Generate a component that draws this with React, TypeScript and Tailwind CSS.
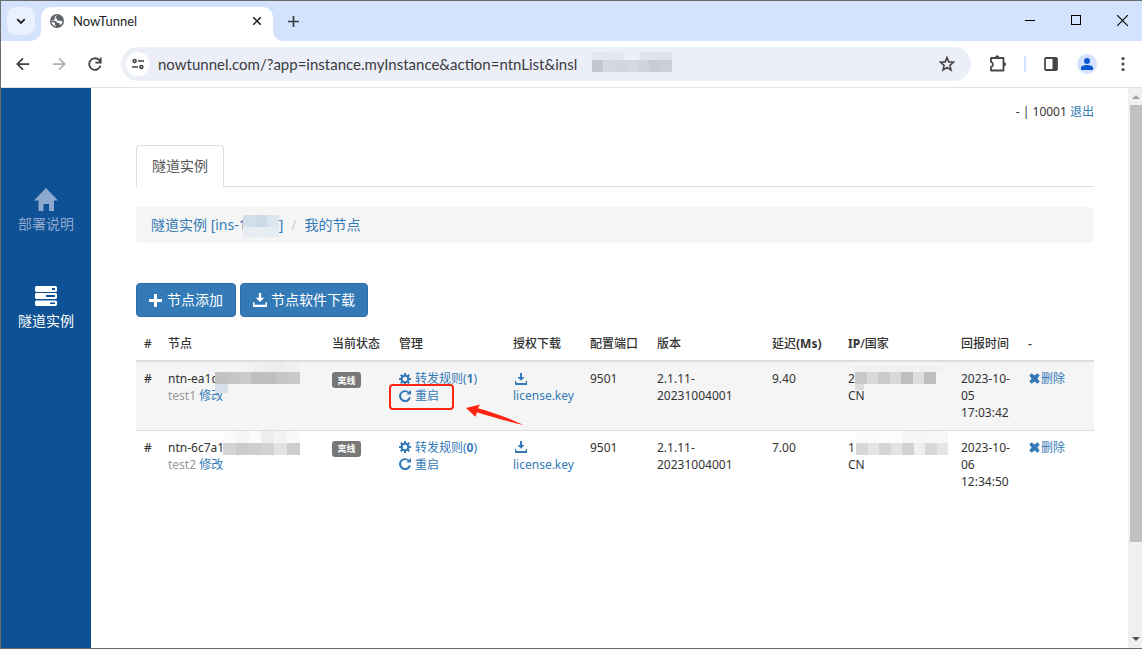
import type { ReactNode } from 'react';

type IconProps = { className?: string };

function Svg({ className = 'size-3', box = '0 0 12 12', children }: IconProps & { box?: string; children: ReactNode }) {
  return (
    <svg viewBox={box} className={`shrink-0 ${className}`} fill="currentColor" aria-hidden="true">
      {children}
    </svg>
  );
}

function PlusIcon() {
  return (
    <Svg box="0 0 13 13" className="size-[13px]">
      <path d="M5 0h3v5h5v3H8v5H5V8H0V5h5z" />
    </Svg>
  );
}

function DownloadIcon({ className }: IconProps) {
  return (
    <Svg className={className}>
      <path d="M5 0h2v4h2.600L6 7.800 2.400 4H5zM0 8h1.300v2h9.400V8H12v4H0z" />
    </Svg>
  );
}

function CogIcon() {
  return (
    <Svg>
      <path
        fillRule="evenodd"
        d="M5 0h2v1.700l1.200.5L9.500 1 11 2.500 9.800 3.800l.5 1.200H12v2h-1.700l-.5 1.200L11 9.500 9.500 11 8.200 9.800l-1.200.5V12H5v-1.700l-1.200-.5L2.500 11 1 9.500l1.200-1.300L1.700 7H0V5h1.700l.5-1.200L1 2.500 2.500 1l1.300 1.200L5 1.700zM6 3.700a2.300 2.300 0 1 0 0 4.600 2.300 2.300 0 0 0 0-4.600z"
      />
    </Svg>
  );
}

function RepeatIcon() {
  return (
    <Svg>
      <path d="M10 1.700 12 0v4.500H7.500L8.900 3A4 4 0 1 0 9.900 7.300h2A6 6 0 1 1 10 1.700z" />
    </Svg>
  );
}

function RemoveIcon() {
  return (
    <Svg box="0 0 11 11" className="size-[11px]">
      <path d="M2.600.3 5.500 2.600 8.400.3l2.300 2.300L8.400 5.500l2.300 2.900-2.300 2.300-2.900-2.300-2.900 2.300L.3 8.400l2.300-2.900L.3 2.600z" />
    </Svg>
  );
}

function HomeIcon() {
  return (
    <Svg box="0 0 24 23" className="h-[23px] w-6">
      <path d="M12 0l12 12.500h-4V23h-5v-7H9.500v7h-5V12.500H0z" />
    </Svg>
  );
}

function ServerIcon() {
  return (
    <Svg box="0 0 22 20" className="h-5 w-[22px]">
      <path
        fillRule="evenodd"
        d="M1 0h20l1 1v4l-1 1H1L0 5V1zM17 2v2h3V2zM1 7h20l1 1v4l-1 1H1l-1-1V8zM11 9v2h9V9zM1 14.500h20l1 1V19l-1 1H1l-1-1v-3.500zM15 16.500v1.500h5v-1.500z"
      />
    </Svg>
  );
}

function GlobeIcon() {
  return (
    <Svg box="0 0 14 14" className="size-[14px] text-[#5f6368]">
      <circle cx="7" cy="7" r="7" />
      <path
        fill="#fff"
        d="M7.600 1.500c-.9.700-2 .9-2.100 1.900 0 1.100 1.300.7 1.700 1.600.3.800-.4 1.200.3 1.700.9.600 1.500-.6 2.400-.2.900.500 1.300 1 2.600.7-.1 1.500-.8 2.900-2 3.900-.8-.5-.7-1.700-1.500-2-.7-.2-1.500.100-1.900-.7-.5-1-1.700-1.300-3-1.300H1.500l.1.900c1 .2 2.700.1 3.200.9.500.8-.3 1.500.2 2.200.3.600.9.500 1 1.300C3.300 12 1.500 9.800 1.500 7l.1-.4h2.300c.6-.3.200-1.200.9-1.700.4-.4-.3-1.300-.1-2C5.300 1.900 6.400 1.500 7.600 1.500z"
      />
    </Svg>
  );
}

function Stroke({ className = 'size-4', width = 2, children }: IconProps & { width?: number; children: ReactNode }) {
  return (
    <svg viewBox="0 0 16 16" className={`shrink-0 ${className}`} fill="none" stroke="currentColor" strokeWidth={width} aria-hidden="true">
      {children}
    </svg>
  );
}

// Pixelated strip that hides part of a value
function Mosaic({ className, cells }: { className: string; cells: string[] }) {
  return (
    <span className={`absolute flex ${className}`} aria-hidden="true">
      {cells.map((color, i) => (
        <span key={i} className={`flex-1 ${color}`} />
      ))}
    </span>
  );
}

function Tab() {
  return (
    <div className="relative mt-1.5 flex h-[34px] w-[232px] items-center rounded-t-[10px] bg-white pr-2.5 pb-1.5 pl-[9px]">
      <span className="absolute bottom-0 -left-2.5 size-2.5 bg-white">
        <span className="block size-full rounded-br-[10px] bg-[#d3e3fd]" />
      </span>
      <span className="absolute -right-2.5 bottom-0 size-2.5 bg-white">
        <span className="block size-full rounded-bl-[10px] bg-[#d3e3fd]" />
      </span>
      <GlobeIcon />
      <span className="ml-[9px] flex-1 font-[family-name:Lato,sans-serif] text-[13px] leading-4 text-[#1f1f1f]">NowTunnel</span>
      <button aria-label="Close tab" className="flex size-3 items-center justify-center text-[#1f1f1f]">
        <Stroke className="size-[10px]" width={2.5}>
          <path d="M2 2l12 12M14 2L2 14" />
        </Stroke>
      </button>
    </div>
  );
}

function TitleBar() {
  return (
    <div className="flex h-10 bg-[#d3e3fd]">
      <button aria-label="Search tabs" className="mx-1.5 mt-1.5 flex size-7 items-center justify-center rounded-[9px] bg-[#e9f1fe] text-[#1f1f1f]">
        <Stroke className="size-[10px]" width={3}>
          <path d="M2 5l6 6 6-6" />
        </Stroke>
      </button>
      <Tab />
      <button aria-label="New tab" className="mt-1.5 ml-3.5 flex h-7 w-3 items-center justify-center text-[#3c3f44]">
        <Stroke className="size-[11px]" width={2.5}>
          <path d="M8 0v16M0 8h16" />
        </Stroke>
      </button>
      <div className="ml-auto flex h-[38px] items-center gap-9 pr-3.5 text-black">
        <button aria-label="Minimize">
          <Stroke className="size-[10px]" width={1.6}>
            <path d="M0 8.800h16" />
          </Stroke>
        </button>
        <button aria-label="Maximize" className="size-[10px] border border-black" />
        <button aria-label="Close">
          <Stroke className="size-[11px]" width={1.6}>
            <path d="M0 0l16 16M16 0L0 16" />
          </Stroke>
        </button>
      </div>
    </div>
  );
}

function Toolbar() {
  return (
    <div className="flex h-[47px] items-center border-b border-[#dfe1e5] bg-white text-[#3c3f44]">
      <div className="flex items-center gap-[22px] pl-[15px]">
        <button aria-label="Back">
          <Stroke className="size-3.5">
            <path d="M15 8H2M8 1.500L1.500 8 8 14.500" />
          </Stroke>
        </button>
        <button aria-label="Forward" className="text-[#aeb0b3]">
          <Stroke className="size-3.5">
            <path d="M1 8h13M8 1.500L14.500 8 8 14.500" />
          </Stroke>
        </button>
        <button aria-label="Reload">
          <Stroke className="size-3.5">
            <path d="M14.300 10A6.600 6.600 0 1 1 12.600 3.300L14.500 5.500" />
            <path d="M14.500 .5v6h-6" />
          </Stroke>
        </button>
      </div>
      <div className="relative ml-[19px] flex h-[34px] flex-1 items-center rounded-full bg-[#eceef8] pr-4 pl-[5px]">
        <span className="flex size-6 items-center justify-center rounded-full bg-white">
          <Stroke className="size-3">
            <circle cx="3.500" cy="4" r="2" />
            <path d="M8 4h8M0 12h8" />
            <circle cx="12.500" cy="12" r="2" />
          </Stroke>
        </span>
        <input
          aria-label="Address"
          className="ml-2 h-6 min-w-0 flex-1 bg-transparent font-[family-name:Lato,sans-serif] text-[15px] text-[#3a3b3d] outline-none"
          defaultValue="nowtunnel.com/?app=instance.myInstance&action=ntnList&insl"
        />
        <Mosaic className="top-[5px] left-[471px] h-2 w-20" cells={['bg-[#e5e7ef]', 'bg-[#e6e8f1]', 'bg-[#eceef8]', 'bg-[#e2e4ed]', 'bg-[#dfe2ea]']} />
        <Mosaic
          className="top-[13px] left-[471px] h-3 w-20"
          cells={['bg-[#c5c7ce]', 'bg-[#d5d8e1]', 'bg-[#d3d6df]', 'bg-[#d7d9e2]', 'bg-[#d0d3dc]', 'bg-[#c9ccd4]', 'bg-[#cccfd7]']}
        />
        <button aria-label="Bookmark this page" className="text-[#474747]">
          <Stroke className="size-4" width={1.6}>
            <path d="M8 1.500l1.800 4.400 4.700.4-3.600 3.100 1.100 4.600L8 11.500 4 14l1.100-4.600L1.500 6.300l4.700-.4z" />
          </Stroke>
        </button>
      </div>
      <div className="flex items-center pr-[17px] pl-[18px] text-[#474747]">
        <button aria-label="Extensions">
          <svg viewBox="0 0 18 18" className="size-[18px]" fill="none" stroke="currentColor" strokeWidth="1.8" aria-hidden="true">
            <path d="M2 3h12.500v12.500H2v-3.600a2.600 2.600 0 0 0 0-5z" strokeLinejoin="round" />
            <path d="M6.500 2.200a1.800 1.800 0 0 1 3.500 0zM15.200 7.500a1.800 1.800 0 0 1 0 3.500z" fill="currentColor" strokeWidth="1" />
          </svg>
        </button>
        <span className="ml-[17px] h-4 w-0.5 bg-[#d3e3fd]" />
        <button aria-label="Side panel" className="ml-[18px]">
          <svg viewBox="0 0 14 14" className="size-3.5" aria-hidden="true">
            <rect x="1" y="1" width="12" height="12" rx="1" fill="none" stroke="currentColor" strokeWidth="1.8" />
            <path d="M8.500 1H13v12H8.500z" fill="currentColor" />
          </svg>
        </button>
        <button aria-label="Profile" className="ml-[19px] flex size-5 items-center justify-center rounded-full bg-[#d3e3fd] text-[#0b57d0]">
          <Svg>
            <circle cx="6" cy="3" r="3" />
            <path d="M0 12V9.800C0 8 3 7 6 7s6 1 6 2.800V12z" />
          </Svg>
        </button>
        <button aria-label="Menu" className="ml-6">
          <svg viewBox="0 0 4 16" className="h-4 w-1" fill="currentColor" aria-hidden="true">
            <circle cx="2" cy="2.500" r="1.600" />
            <circle cx="2" cy="8" r="1.600" />
            <circle cx="2" cy="13.500" r="1.600" />
          </svg>
        </button>
      </div>
    </div>
  );
}

function Sidebar() {
  return (
    <nav className="w-[90px] shrink-0 bg-[#0e5195] pt-[100px] text-center text-[14px] leading-5">
      <a href="#deploy" className="flex flex-col items-center gap-[3px] text-[#8ea9cf]">
        <HomeIcon />
        部署说明
      </a>
      <a href="#instance" className="mt-[52px] flex flex-col items-center gap-[5px] text-white">
        <ServerIcon />
        隧道实例
      </a>
    </nav>
  );
}

const columns = [
  { key: 'mark', title: '#', width: 'w-[24px]' },
  { key: 'node', title: '节点', width: 'w-[164px]' },
  { key: 'status', title: '当前状态', width: 'w-[67px]' },
  { key: 'manage', title: '管理', width: 'w-[114px]' },
  { key: 'license', title: '授权下载', width: 'w-[77px]' },
  { key: 'port', title: '配置端口', width: 'w-[67px]' },
  { key: 'version', title: '版本', width: 'w-[115px]' },
  { key: 'delay', title: <>延迟<b>(Ms)</b></>, width: 'w-[76px]' },
  { key: 'ip', title: <><b>IP</b>/国家</>, width: 'w-[113px]' },
  { key: 'time', title: '回报时间', width: 'w-[67px]' },
  { key: 'delete', title: '-', width: 'w-[74px]' },
];

const nodes = [
  {
    id: 'ntn-ea1c',
    name: 'test1',
    rules: 1,
    delay: '9.40',
    ip: '2',
    date: ['2023-10-', '05', '17:03:42'],
    marked: true,
    idMask: (
      <>
        <Mosaic className="-top-2 left-[72px] h-2.5 w-[60px]" cells={['bg-[#f2f2f2]', 'bg-[#efefef]', 'bg-[#ececec]', 'bg-[#efefef]']} />
        <Mosaic
          className="top-0.5 left-[47px] h-3 w-[85px]"
          cells={['bg-[#c2c2c2]', 'bg-[#c6c6c6]', 'bg-[#cacaca]', 'bg-[#bebebe]', 'bg-[#bfbfbf]', 'bg-[#c5c5c5]', 'bg-[#c9c9c9]']}
        />
        <Mosaic className="top-3.5 left-[47px] h-[9px] w-[13px]" cells={['bg-[#d6e1eb]']} />
      </>
    ),
    ipMask: (
      <>
        <Mosaic className="-top-1 left-[7px] h-1.5 w-[86px]" cells={['bg-[#f1f1f1]']} />
        <Mosaic
          className="top-0.5 left-[7px] h-3 w-[81px]"
          cells={['bg-[#c9c9c9]', 'bg-[#d9d9d9]', 'bg-[#cacaca]', 'bg-[#d8d8d8]', 'bg-[#bebebe]', 'bg-[#dedede]', 'bg-[#bebebe]']}
        />
        <Mosaic className="top-3.5 left-[7px] h-1.5 w-[9px]" cells={['bg-[#dddddd]']} />
      </>
    ),
  },
  {
    id: 'ntn-6c7a1',
    name: 'test2',
    rules: 0,
    delay: '7.00',
    ip: '1',
    date: ['2023-10-', '06', '12:34:50'],
    marked: false,
    idMask: (
      <>
        <Mosaic className="-top-2 left-[55px] h-3 w-[77px]" cells={['bg-[#fbfbfb]', 'bg-[#f6f6f6]', 'bg-[#fbfbfb]', 'bg-[#eeeeee]', 'bg-[#f3f3f3]', 'bg-[#f9f9f9]']} />
        <Mosaic
          className="top-1 left-[55px] h-3 w-[77px]"
          cells={['bg-[#d4d4d4]', 'bg-[#cbcbcb]', 'bg-[#cecece]', 'bg-[#d2d2d2]', 'bg-[#e2e2e2]', 'bg-[#cecece]']}
        />
      </>
    ),
    ipMask: (
      <>
        <Mosaic className="-top-2 left-2 h-3 w-[92px]" cells={['bg-[#fafafa]', 'bg-[#fcfcfc]', 'bg-[#f6f6f6]', 'bg-[#f7f7f7]']} />
        <Mosaic
          className="top-1 left-2 h-3 w-[92px]"
          cells={['bg-[#d8d8d8]', 'bg-[#e5e5e5]', 'bg-[#d5d5d5]', 'bg-[#e3e3e3]', 'bg-[#d2d2d2]', 'bg-[#efefef]', 'bg-[#d8d8d8]', 'bg-[#e5e5e5]']}
        />
      </>
    ),
  },
];

function RestartMarker() {
  return (
    <>
      <span className="pointer-events-none absolute -top-[3px] -left-[10px] h-[26px] w-[65px] rounded-[4px] border-2 border-[#fe2412]" />
      <svg viewBox="0 0 58 22" className="pointer-events-none absolute top-4 left-[67px] h-[22px] w-[58px] max-w-none" fill="#fe2412" aria-hidden="true">
        <path d="M0 5L14 1.500l-2 3.700C27 9.500 42 14.500 57.500 22 41 18.500 25 13.500 11 9.200l-1.500 4.600z" />
      </svg>
    </>
  );
}

function NodeTable() {
  return (
    <table className="mt-2.5 w-full table-fixed text-left text-[12px] leading-[17px] text-[#333]">
      <thead>
        <tr className="border-b-2 border-[#ddd]">
          {columns.map((column) => (
            <th key={column.key} className={`p-2 font-medium whitespace-nowrap ${column.width}`}>
              {column.title}
            </th>
          ))}
        </tr>
      </thead>
      <tbody>
        {nodes.map((node) => (
          <tr key={node.id} className="h-[69px] border-[#ddd] align-top odd:border-b odd:bg-[#f5f5f5]">
            <th className="p-2 font-medium">#</th>
            <td className="p-2">
              <div className="relative">
                {node.id}
                {node.idMask}
              </div>
              <span className="text-[#999]">{node.name}</span>{' '}
              <a href="#edit" className="text-[#337ab7]">
                修改
              </a>
            </td>
            <td className="p-2">
              <span className="mt-0.5 flex h-4 w-[29px] items-center justify-center rounded-[3px] bg-[#777] text-[9px] font-bold text-white">离线</span>
            </td>
            <td className="p-2 whitespace-nowrap text-[#337ab7]">
              <a href="#rules" className="flex items-center gap-1">
                <CogIcon />
                <span>
                  转发规则(<b>{node.rules}</b>)
                </span>
              </a>
              <div className="relative">
                <a href="#restart" className="flex items-center gap-1">
                  <RepeatIcon />
                  重启
                </a>
                {node.marked && <RestartMarker />}
              </div>
            </td>
            <td className="p-2">
              <a href="#license" className="text-[#337ab7]">
                <span className="flex h-[17px] items-center pl-0.5">
                  <DownloadIcon />
                </span>
                license.key
              </a>
            </td>
            <td className="p-2">9501</td>
            <td className="p-2">
              2.1.11-
              <br />
              20231004001
            </td>
            <td className="p-2">{node.delay}</td>
            <td className="p-2">
              <div className="relative">
                {node.ip}
                {node.ipMask}
              </div>
              CN
            </td>
            <td className="p-2 whitespace-nowrap">
              {node.date.map((line) => (
                <div key={line}>{line}</div>
              ))}
            </td>
            <td className="p-2">
              <a href="#delete" className="flex items-center gap-px pl-px text-[#337ab7]">
                <RemoveIcon />
                删除
              </a>
            </td>
          </tr>
        ))}
      </tbody>
    </table>
  );
}

function Content() {
  return (
    <main className="min-w-0 flex-1 pr-[34px] pl-[45px]">
      <div className="mt-4 text-right text-[12px] leading-4 text-[#333]">
        - | 10001{' '}
        <a href="#logout" className="text-[#337ab7]">
          退出
        </a>
      </div>
      <div className="mt-[25px] flex border-b border-[#ddd]">
        <a href="#instance" className="-mb-px rounded-t-[4px] border border-b-0 border-[#ddd] bg-white px-[15px] pt-2.5 pb-[11px] text-[14px] leading-5 text-[#555]">
          隧道实例
        </a>
      </div>
      <div className="mt-5 flex rounded-[4px] bg-[#f5f5f5] px-[15px] py-2 text-[14px] leading-5 text-[#337ab7]">
        <a href="#instance" className="relative flex">
          隧道实例 [ins-1<span className="w-8" />]
          <Mosaic className="top-0 right-1 h-3 w-9" cells={['bg-[#d2dfeb]', 'bg-[#cddbe8]', 'bg-[#dbe5ee]']} />
          <Mosaic className="top-3 right-1 h-2.5 w-9" cells={['bg-[#e6ecf1]', 'bg-[#e9eef2]', 'bg-[#e4ebf1]']} />
        </a>
        <span className="px-2 text-[#ccc]">/</span>
        <a href="#nodes">我的节点</a>
      </div>
      <div className="mt-10 flex gap-1 text-[14px] leading-5 text-white">
        <button className="flex items-center gap-[5px] rounded-[4px] border border-[#2e6da4] bg-[#337ab7] px-3 py-1.5">
          <PlusIcon />
          节点添加
        </button>
        <button className="flex items-center gap-1 rounded-[4px] border border-[#2e6da4] bg-[#337ab7] px-3 py-1.5">
          <DownloadIcon className="size-[14px]" />
          节点软件下载
        </button>
      </div>
      <NodeTable />
    </main>
  );
}

function Scrollbar() {
  return (
    <div className="flex w-3.5 shrink-0 flex-col items-center bg-[#f0f0f0] pl-0.5" aria-hidden="true">
      <svg viewBox="0 0 8 4" className="mt-[7px] mb-1.5 h-1 w-2 shrink-0" fill="#a3a3a3">
        <path d="M4 0l4 4H0z" />
      </svg>
      <span className="h-[78%] w-full bg-[#c1c1c1]" />
      <svg viewBox="0 0 8 4" className="mt-auto mb-[7px] h-1 w-2 shrink-0" fill="#505050">
        <path d="M0 0h8L4 4z" />
      </svg>
    </div>
  );
}

export default function App() {
  return (
    <div className="flex min-h-screen flex-col border-t border-b border-l border-[#6b6c70] bg-white font-['Noto_Sans','Noto_Sans_CJK_SC',sans-serif]">
      <TitleBar />
      <Toolbar />
      <div className="flex flex-1">
        <Sidebar />
        <Content />
        <Scrollbar />
      </div>
    </div>
  );
}
